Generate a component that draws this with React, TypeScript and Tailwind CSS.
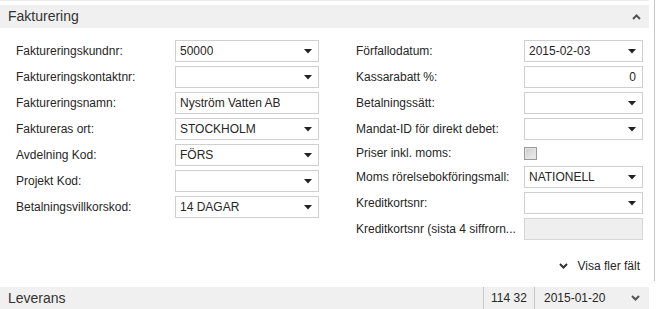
import React from "react";

type Field = {
  label: string;
  value?: string;
  kind: "select" | "text" | "number" | "check" | "disabled";
};

const leftFields: Field[] = [
  { label: "Faktureringskundnr:", value: "50000", kind: "select" },
  { label: "Faktureringskontaktnr:", kind: "select" },
  { label: "Faktureringsnamn:", value: "Nyström Vatten AB", kind: "text" },
  { label: "Faktureras ort:", value: "STOCKHOLM", kind: "select" },
  { label: "Avdelning Kod:", value: "FÖRS", kind: "select" },
  { label: "Projekt Kod:", kind: "select" },
  { label: "Betalningsvillkorskod:", value: "14 DAGAR", kind: "select" },
];

const rightFields: Field[] = [
  { label: "Förfallodatum:", value: "2015-02-03", kind: "select" },
  { label: "Kassarabatt %:", value: "0", kind: "number" },
  { label: "Betalningssätt:", kind: "select" },
  { label: "Mandat-ID för direkt debet:", kind: "select" },
  { label: "Priser inkl. moms:", kind: "check" },
  { label: "Moms rörelsebokföringsmall:", value: "NATIONELL", kind: "select" },
  { label: "Kreditkortsnr:", kind: "select" },
  { label: "Kreditkortsnr (sista 4 siffrorn...", kind: "disabled" },
];

function Caret() {
  return (
    <svg width="8" height="5" viewBox="0 0 8 5" className="shrink-0">
      <path d="M0 0 H8 L4 4.5 Z" fill="#222" />
    </svg>
  );
}

function Chevron({ up, color }: { up?: boolean; color: string }) {
  return (
    <svg width="9" height="6" viewBox="0 0 9 6" className="shrink-0">
      <path
        d={up ? "M1 5 L4.5 1.5 L8 5" : "M1 1 L4.5 4.5 L8 1"}
        fill="none"
        stroke={color}
        strokeWidth="2"
      />
    </svg>
  );
}

function Input({ field, width }: { field: Field; width: string }) {
  if (field.kind === "check") {
    return (
      <div className={`${width} flex items-center`}>
        <div className="w-[13px] h-[13px] border border-[#9a9a9a] bg-[#e4e4e4] p-[1px]">
          <div className="w-full h-full bg-gradient-to-br from-[#cfcfcf] to-[#ececec]" />
        </div>
      </div>
    );
  }
  if (field.kind === "disabled") {
    return <div className={`${width} h-[22px] border border-[#d6d6d6] bg-[#efefef]`} />;
  }
  return (
    <div
      className={`${width} h-[22px] border border-[#cfcfcf] bg-white flex items-center pl-[4px] pr-[6px] ${
        field.kind === "number" ? "justify-end pr-[4px]" : "justify-between"
      }`}
    >
      <span className="truncate">{field.value}</span>
      {field.kind === "select" && <Caret />}
    </div>
  );
}

function Column({ fields, labelW, boxW }: { fields: Field[]; labelW: string; boxW: string }) {
  return (
    <div className="flex flex-col gap-[4px]">
      {fields.map((f) => (
        <div key={f.label} className={`flex items-center ${f.kind === "check" ? "h-[18px]" : "h-[22px]"}`}>
          <span className={`${labelW} shrink-0 truncate`}>{f.label}</span>
          <Input field={f} width={boxW} />
        </div>
      ))}
    </div>
  );
}

export default function App() {
  return (
    <div
      className="w-[658px] h-[309px] bg-white overflow-hidden flex text-[12px] text-[#262626]"
      style={{ fontFamily: '"Liberation Sans", Arial, sans-serif' }}
    >
      <div className="w-[649px] flex flex-col">
        <div className="h-[1px] bg-[#ececec]" />
        <div className="h-[4px]" />
        <div className="h-[23px] bg-[#f0f0f0] flex items-center justify-between pl-[8px] pr-[8px]">
          <span className="text-[14px] text-[#333]">Fakturering</span>
          <Chevron up color="#555" />
        </div>

        <div className="h-[259px] flex flex-col pt-[12px]">
          <div className="flex">
            <div className="pl-[16px]">
              <Column fields={leftFields} labelW="w-[159px]" boxW="w-[144px]" />
            </div>
            <div className="pl-[37px]">
              <Column fields={rightFields} labelW="w-[168px]" boxW="w-[119px]" />
            </div>
          </div>
          <div className="mt-auto mb-[13px] flex items-center justify-end gap-[10px] pr-[9px] h-[16px]">
            <Chevron color="#333" />
            <span>Visa fler fält</span>
          </div>
        </div>

        <div className="h-[22px] bg-[#f0f0f0] flex items-center">
          <span className="pl-[8px] text-[14px] text-[#333] flex-1">Leverans</span>
          <div className="h-full flex items-center border-l border-[#c8c8c8] pl-[7px] w-[51px]">114 32</div>
          <div className="h-full flex items-center border-l border-[#c8c8c8] pl-[9px] w-[97px]">2015-01-20</div>
          <div className="pr-[9px]">
            <Chevron color="#555" />
          </div>
        </div>
      </div>
      <div className="w-[5px]" />
      <div className="w-[1px] h-[281px] bg-[#c6c6c6]" />
    </div>
  );
}
